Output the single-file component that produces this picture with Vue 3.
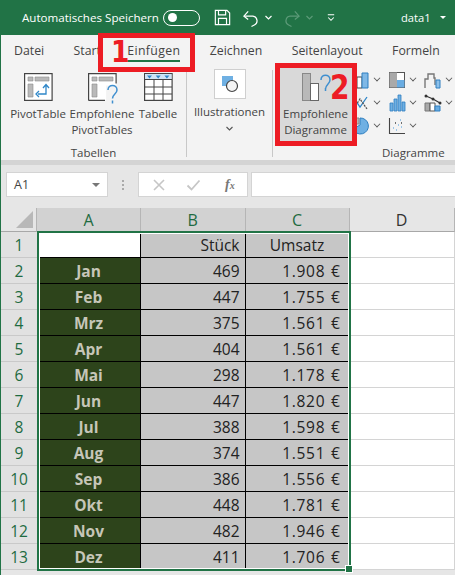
<script setup>
const rows = [
  ["Jan", 469, "1.908 €"],
  ["Feb", 447, "1.755 €"],
  ["Mrz", 375, "1.561 €"],
  ["Apr", 404, "1.561 €"],
  ["Mai", 298, "1.178 €"],
  ["Jun", 447, "1.820 €"],
  ["Jul", 388, "1.598 €"],
  ["Aug", 374, "1.551 €"],
  ["Sep", 386, "1.556 €"],
  ["Okt", 448, "1.781 €"],
  ["Nov", 482, "1.946 €"],
  ["Dez", 411, "1.706 €"],
];

const tabs = ["Datei", "Start", "Einfügen", "Zeichnen", "Seitenlayout", "Formeln"];
</script>

<template>
  <div class="window">
    <header class="titlebar">
      <span class="autosave">Automatisches Speichern</span>
      <span class="toggle"><i></i></span>
      <svg class="qa save" width="17" height="17" viewBox="0 0 19 19" fill="none" stroke="#fff" stroke-width="1.3">
        <path d="M1.500 1.500h13l3 3v13h-16z" />
        <path d="M5 1.500v5h8v-5M5 17.500v-7h9v7" />
      </svg>
      <svg class="qa undo" width="16" height="18" viewBox="0 0 17 19" fill="none" stroke="#fff" stroke-width="1.3">
        <path d="M1 7.500h9.500a5 5 0 0 1 1.500 9.500l-3 1.500" />
        <path d="M5.500 2.500l-4.500 5 4.500 3.500" />
      </svg>
      <svg class="qa chev-w" width="7" height="5" viewBox="0 0 7 5" fill="none" stroke="#fff" stroke-width="1.2"><path d="M.5 1l3 3 3-3" /></svg>
      <svg class="qa redo" width="16" height="18" viewBox="0 0 17 19" fill="none" stroke="#5c9a78" stroke-width="1.3">
        <path d="M16 7.500H6.500a5 5 0 0 0-1.500 9.500l3 1.500" />
        <path d="M11.500 2.500l4.500 5-4.500 3.500" />
      </svg>
      <svg class="qa chev-d" width="7" height="5" viewBox="0 0 7 5" fill="none" stroke="#5c9a78" stroke-width="1.2"><path d="M.5 1l3 3 3-3" /></svg>
      <svg class="qa custom" width="8" height="9" viewBox="0 0 10 10" fill="none" stroke="#fff" stroke-width="1.3">
        <path d="M1 1.500h8M1.500 5l3.500 3.500L8.500 5" />
      </svg>
      <span class="docname">data1</span>
      <span class="caret"></span>
    </header>

    <nav class="tabs">
      <span v-for="t in tabs" :key="t" class="tab" :class="{ active: t === 'Einfügen' }">{{ t }}</span>
    </nav>

    <section class="ribbon">
      <div class="group g-tables">
        <div class="tools">
          <div class="big b-pivot">
            <svg width="29" height="28" viewBox="0 0 29 28">
              <rect x=".6" y=".6" width="27.500" height="26.800" fill="#fff" stroke="#444" stroke-width="1.200" />
              <path d="M4 4h5v4H4zM11 4h14v4H11zM4 11h5v13H4z" fill="#b9b9b9" stroke="#8a8a8a" stroke-width=".6" />
              <path d="M14 21h8v-9M19 15l3-3.500 3 3.500M15 18l-3 3 3 3" fill="none" stroke="#2e86c8" stroke-width="1.300" />
            </svg>
            <span>PivotTable</span>
          </div>
          <div class="big b-rec">
            <svg width="32" height="33" viewBox="0 0 32 33">
              <path d="M.6 .6h27.500v12h-10v14.800H.6z" fill="#fff" />
              <path d="M.6 27.400V.6h27.500v10M17 27.400H.6" fill="none" stroke="#444" stroke-width="1.200" />
              <path d="M4 4h5v4H4zM11 4h14v4H11zM4 11h5v13H4z" fill="#b9b9b9" stroke="#8a8a8a" stroke-width=".6" />
              <path d="M20 17c0-6 9-6 9 0 0 4-4.500 4-4.500 8.500M24.500 27.500v3" fill="none" stroke="#3f8fcf" stroke-width="1.500" />
            </svg>
            <span>Empfohlene<br />PivotTables</span>
          </div>
          <div class="big b-table">
            <svg width="29" height="28" viewBox="0 0 29 28">
              <rect x=".6" y=".6" width="27.500" height="26.800" fill="#fff" stroke="#444" stroke-width="1.200" />
              <rect x="1" y="1" width="26.500" height="5" fill="#cfe3f4" />
              <path d="M3 2.500h5l-2.500 3zM11.700 2.500h5l-2.500 3zM20.400 2.500h5l-2.500 3z" fill="#2e86c8" />
              <path d="M1 6.500h27M1 14h27M1 21h27M10 6.500v21M19 6.500v21" fill="none" stroke="#444" stroke-width="1" />
            </svg>
            <span>Tabelle</span>
          </div>
        </div>
        <div class="group-label">Tabellen</div>
      </div>

      <div class="group g-illu">
        <div class="big b-illu">
          <svg width="32" height="30" viewBox="0 0 32 30">
            <rect x=".5" y=".5" width="31" height="29" fill="#fff" stroke="#cfcfcf" />
            <rect x="8" y="7" width="11" height="10" fill="#6fb0e3" />
            <circle cx="18" cy="17" r="5.500" fill="#f4f4f4" stroke="#444" stroke-width="1.200" />
          </svg>
          <span>Illustrationen</span>
          <svg class="chev" width="7" height="5" viewBox="0 0 7 5" fill="none" stroke="#555" stroke-width="1.100"><path d="M.5 1l3 3 3-3" /></svg>
        </div>
      </div>

      <div class="group g-charts">
        <div class="tools">
          <div class="big b-chart">
            <svg width="36" height="32" viewBox="0 0 36 32">
              <rect x=".5" y=".5" width="8" height="27" fill="#b9b9b9" stroke="#888" />
              <rect x="8.500" y="10.500" width="8" height="17" fill="#fff" stroke="#666" />
              <path d="M19 7c0-6.500 9-6.500 9 0 0 4-4.500 4.500-4.500 9M23.500 15v3" fill="none" stroke="#3f8fcf" stroke-width="1.500" />
            </svg>
            <span>Empfohlene<br />Diagramme</span>
          </div>
          <div class="mini-grid">
            <div class="mini">
              <svg width="18" height="18" viewBox="0 0 18 18">
                <path d="M5 6h5v11H5z" fill="#fff" stroke="#444" />
                <path d="M10 2h6v15h-6z" fill="#7fb8e6" stroke="#2e7fc0" />
              </svg>
              <b></b>
            </div>
            <div class="mini">
              <svg width="18" height="18" viewBox="0 0 18 18">
                <rect x="1.500" y="1.500" width="15" height="15" fill="#fff" stroke="#555" />
                <rect x="1.500" y="1.500" width="7.500" height="15" fill="#a9a9a9" />
                <rect x="9" y="9" width="7.500" height="7.500" fill="#69ace2" />
              </svg>
              <b></b>
            </div>
            <div class="mini">
              <svg width="18" height="18" viewBox="0 0 18 18" fill="none">
                <path d="M1 17V8h3V3h6v4h1v7" stroke="#777" stroke-width="1.400" />
                <path d="M12 9h4v8h-4z" fill="#8cc0ea" stroke="#2e7fc0" />
              </svg>
              <b></b>
            </div>
            <div class="mini">
              <svg width="18" height="18" viewBox="0 0 18 18" fill="none">
                <path d="M2 4l6 9 7-10" stroke="#2e86c8" stroke-width="1.300" />
                <path d="M2 14l6-9 7 10" stroke="#555" stroke-width="1.300" stroke-dasharray="2 1" />
              </svg>
              <b></b>
            </div>
            <div class="mini">
              <svg width="18" height="18" viewBox="0 0 18 18">
                <path d="M2 9h3v8H2zM6 5h3v12H6zM10 1h3v16h-3zM14 8h3v9h-3z" fill="#6fb0e3" stroke="#2e7fc0" stroke-width=".8" />
              </svg>
              <b></b>
            </div>
            <div class="mini">
              <svg width="18" height="18" viewBox="0 0 18 18">
                <path d="M1 9h5v8H1z" fill="#a9a9a9" stroke="#777" />
                <path d="M6 9h5v8H6z" fill="#fff" stroke="#555" />
                <path d="M11 12h5v5h-5z" fill="#69ace2" stroke="#2e7fc0" />
                <path d="M2 2l7 3 7 4" fill="none" stroke="#333" stroke-width="1.200" />
                <circle cx="2" cy="2" r="1.500" fill="#333" /><circle cx="9" cy="5" r="1.500" fill="#333" /><circle cx="16" cy="9" r="1.500" fill="#333" />
              </svg>
              <b></b>
            </div>
            <div class="mini">
              <svg width="18" height="18" viewBox="0 0 18 18">
                <path d="M8 1a8 8 0 1 1-7 11l7-4z" fill="#6fb0e3" stroke="#2e7fc0" />
                <path d="M1 1h6v6H1z" fill="#b9b9b9" stroke="#888" />
              </svg>
              <b></b>
            </div>
            <div class="mini">
              <svg width="18" height="18" viewBox="0 0 18 18" fill="none">
                <path d="M1.500 1v15.500H17" stroke="#444" stroke-width="1.100" />
                <path d="M5 11h1M8 13h1M10 8h1M12 3h1M13 10h1" stroke="#7fb8e6" stroke-width="1.500" />
                <path d="M7 6h1M13 6h1" stroke="#444" stroke-width="1.500" />
              </svg>
              <b></b>
            </div>
          </div>
        </div>
        <div class="group-label label-charts">Diagramme</div>
      </div>
    </section>
    <div class="ribbon-edge"></div>

    <section class="formula">
      <div class="namebox">
        <span>A1</span>
        <i class="name-caret"></i>
      </div>
      <div class="dots"><i></i><i></i><i></i></div>
      <div class="fxbox">
        <svg width="14" height="14" viewBox="0 0 14 14" fill="none" stroke="#c6c6c6" stroke-width="1.600"><path d="M2 2l10 10M12 2L2 12" /></svg>
        <svg width="15" height="14" viewBox="0 0 15 14" fill="none" stroke="#c6c6c6" stroke-width="1.800"><path d="M1.500 7.500l4 4 8-9" /></svg>
        <span class="fx">f<small>x</small></span>
      </div>
      <div class="input"></div>
    </section>

    <section class="sheet">
      <div class="head corner"><i></i></div>
      <div class="head sel">A</div>
      <div class="head sel">B</div>
      <div class="head sel">C</div>
      <div class="head">D</div>

      <div class="rowhead">1</div>
      <div class="cell blank"></div>
      <div class="cell num">Stück</div>
      <div class="cell mid">Umsatz</div>
      <div class="cell free"></div>

      <template v-for="(r, i) in rows" :key="r[0]">
        <div class="rowhead">{{ i + 2 }}</div>
        <div class="cell month">{{ r[0] }}</div>
        <div class="cell num">{{ r[1] }}</div>
        <div class="cell num money">{{ r[2] }}</div>
        <div class="cell free"></div>
      </template>

      <div class="selection"><i></i></div>
    </section>

    <div class="mark mark-1"><span>1</span></div>
    <div class="mark mark-2"><span>2</span></div>
  </div>
</template>

<style scoped>
.window {
  position: relative;
  width: 455px;
  height: 575px;
  overflow: hidden;
  background: #e6e6e6;
  border-left: 1px solid #217346;
  box-sizing: border-box;
  font-family: "Open Sans", "Noto Sans", sans-serif;
  color: #444;
}

.titlebar {
  display: flex;
  align-items: center;
  height: 35px;
  margin-left: -1px;
  padding-left: 22px;
  background: #217346;
  color: #fff;
  font-size: 11.600px;
}

.autosave {
  width: 141px;
  white-space: nowrap;
}

.toggle {
  display: flex;
  align-items: center;
  width: 37px;
  height: 16px;
  box-sizing: border-box;
  padding-left: 4px;
  border: 1px solid #fff;
  border-radius: 9px;
}

.toggle i {
  width: 9px;
  height: 9px;
  background: #fff;
  border-radius: 50%;
}

.save {
  margin-left: 14px;
}

.undo {
  margin-left: 12px;
}

.chev-w {
  margin-left: 6px;
}

.redo {
  margin-left: 12px;
}

.chev-d {
  margin-left: 6px;
}

.custom {
  margin-left: 14px;
}

.docname {
  margin-left: 66px;
  font-size: 11.200px;
}

.caret {
  margin-left: 9px;
  border-top: 3px solid #fff;
  border-left: 3px solid transparent;
  border-right: 3px solid transparent;
}

.tabs {
  display: flex;
  gap: 29.400px;
  height: 30px;
  padding-left: 13px;
  background: #f3f3f3;
  font-size: 12.300px;
  line-height: 31px;
  white-space: nowrap;
}

.tab {
  position: relative;
}

.tab.active {
  margin-left: -3px;
  letter-spacing: 0.35px;
}

.tab.active::after {
  content: "";
  position: absolute;
  left: 0;
  right: 0;
  bottom: 3px;
  height: 2px;
  background: #217346;
}

.ribbon {
  display: flex;
  height: 95px;
  background: #f3f3f3;
  font-size: 11.500px;
  line-height: 16px;
}

.group {
  display: flex;
  flex-direction: column;
  box-sizing: border-box;
  margin-bottom: 3px;
  border-right: 1px solid #c8c8c8;
}

.group:last-child {
  border-right: 0;
}

.tools {
  display: flex;
  flex: 1;
}

.group-label {
  height: 17px;
  margin-bottom: -5px;
  text-align: center;
  white-space: nowrap;
}

.label-charts {
  margin-left: 109px;
  text-align: left;
}

.g-tables {
  flex: none;
  width: 186px;
  margin-top: 5px;
}

.g-illu {
  flex: none;
  width: 86px;
  margin-top: 5px;
}

.g-charts {
  flex: 1;
  min-width: 0;
  margin-top: 2px;
}

.big {
  display: flex;
  flex: none;
  flex-direction: column;
  align-items: center;
  text-align: center;
  white-space: nowrap;
  box-sizing: border-box;
}

.big svg {
  flex-shrink: 0;
}

.b-pivot {
  width: 64px;
  margin-left: 5px;
  padding-top: 3px;
}

.b-pivot span {
  margin-top: 5px;
}

.b-table span {
  margin-top: 5px;
}

.b-rec {
  width: 64px;
  padding-top: 3px;
  padding-left: 4px;
}

.b-rec span {
  margin-left: -4px;
}

.b-table {
  width: 48px;
  padding-top: 3px;
}

.b-illu {
  margin-top: -1px;
}

.b-illu span {
  margin-top: 5px;
}

.chev {
  margin-top: 6px;
}

.b-chart {
  width: 73px;
  height: 76px;
  margin-left: 6px;
  padding-top: 6px;
  padding-left: 8px;
  background: #d9d9d9;
}

.b-chart span {
  margin-top: 1px;
  margin-left: -8px;
}

.mini-grid {
  display: grid;
  grid-template-columns: repeat(3, 36px);
  grid-auto-rows: 23px;
  padding-top: 1px;
}

.mini {
  display: flex;
  align-items: center;
  gap: 4px;
}

.mini b {
  width: 5px;
  height: 5px;
  margin-top: -3px;
  border-right: 1px solid #555;
  border-bottom: 1px solid #555;
  transform: rotate(45deg) scale(0.8);
}

.ribbon-edge {
  height: 5px;
  background: #d4d4d4;
}

.formula {
  display: flex;
  align-items: flex-start;
  height: 43px;
  padding-top: 7px;
  box-sizing: border-box;
  background: #e6e6e6;
}

.namebox {
  display: flex;
  align-items: center;
  justify-content: space-between;
  width: 102px;
  height: 25px;
  margin-left: 5px;
  padding: 0 7px;
  box-sizing: border-box;
  background: #fff;
  border: 1px solid #d4d4d4;
  font-size: 12.500px;
}

.name-caret {
  border-top: 4px solid #777;
  border-left: 4px solid transparent;
  border-right: 4px solid transparent;
}

.dots {
  display: flex;
  flex-direction: column;
  gap: 2px;
  width: 30px;
  height: 25px;
  align-items: center;
  justify-content: center;
}

.dots i {
  width: 2px;
  height: 2px;
  background: #aaa;
}

.fxbox {
  display: flex;
  align-items: center;
  gap: 20px;
  width: 110px;
  height: 25px;
  padding-left: 13px;
  box-sizing: border-box;
  background: #fff;
  border: 1px solid #d4d4d4;
}

.fx {
  margin-left: 4px;
  color: #777;
  font-family: "Liberation Serif", serif;
  font-style: italic;
  font-size: 14px;
  font-weight: 700;
}

.fx small {
  font-size: 10px;
}

.input {
  flex: 1;
  height: 25px;
  margin-left: 3px;
  background: #fff;
  border: 1px solid #d4d4d4;
  border-right: 0;
  box-sizing: border-box;
}

.sheet {
  position: relative;
  display: grid;
  grid-template-columns: 36px 104px 104.500px 104px 105px;
  grid-template-rows: 24px repeat(13, 26px);
  background: #fff;
  font-size: 15.500px;
}

.head {
  display: flex;
  align-items: center;
  justify-content: center;
  background: #e6e6e6;
  border-right: 1px solid #b5b5b5;
  border-bottom: 1px solid #a8a8a8;
  box-sizing: border-box;
  color: #333;
  font-size: 16px;
}

.head.sel {
  background: #d2d2d2;
  color: #1e6b41;
  border-bottom: 1px solid #217346;
}

.corner {
  position: relative;
}

.corner i {
  position: absolute;
  right: 3px;
  bottom: 3px;
  border-left: 17px solid transparent;
  border-bottom: 17px solid #b8b8b8;
}

.rowhead {
  display: flex;
  align-items: center;
  justify-content: center;
  background: #e1e1e1;
  border-bottom: 1px solid #c9c9c9;
  box-sizing: border-box;
  color: #1e6b41;
  font-size: 15.500px;
}

.cell {
  display: flex;
  align-items: center;
  box-sizing: border-box;
  color: #222;
  white-space: nowrap;
}

.blank {
  background: #fff;
  border-right: 1px solid #000;
  border-bottom: 1px solid #000;
}

.num,
.mid {
  justify-content: flex-end;
  padding-right: 5px;
  background: #c6c6c6;
  border-right: 1px solid #000;
  border-bottom: 1px solid #000;
}

.mid {
  justify-content: center;
  padding-right: 0;
}

.money {
  padding-right: 8px;
  letter-spacing: 0.7px;
  word-spacing: 1px;
}

.month {
  justify-content: center;
  background: #2d441b;
  color: #c6c6b8;
  font-weight: 700;
  border-right: 1px solid #000;
  border-bottom: 1px solid #000;
}

.free {
  border-right: 1px solid #d4d4d4;
  border-bottom: 1px solid #d4d4d4;
}

.selection {
  position: absolute;
  left: 36px;
  top: 23px;
  width: 314px;
  height: 340px;
  box-sizing: border-box;
  border: 2px solid #217346;
  box-shadow: inset 0 0 0 1px #fff;
  pointer-events: none;
}

.selection i {
  position: absolute;
  right: -4px;
  bottom: -4px;
  width: 6px;
  height: 6px;
  background: #217346;
  border: 1px solid #fff;
}

.mark {
  position: absolute;
  box-sizing: border-box;
  border: 5px solid #ed1c24;
  color: #ed1c24;
  font-family: "DejaVu Sans", sans-serif;
  font-weight: 700;
  line-height: 1;
}

.mark span {
  position: absolute;
  transform: scaleX(0.85);
  transform-origin: left top;
}

.mark-1 {
  left: 97px;
  top: 33px;
  width: 97px;
  height: 39px;
}

.mark-1 span {
  left: 8px;
  top: -2px;
  font-size: 31px;
}

.mark-2 {
  left: 274px;
  top: 63px;
  width: 82px;
  height: 83px;
}

.mark-2 span {
  left: 50px;
  top: 3px;
  font-size: 33px;
}
</style>
